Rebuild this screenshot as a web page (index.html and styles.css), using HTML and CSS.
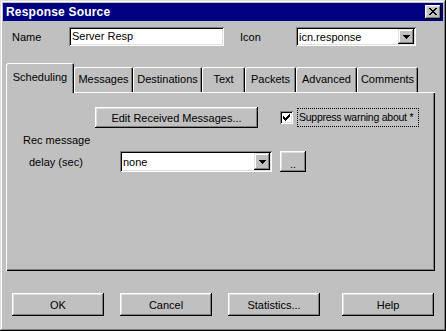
FILE: index.html
```html
<!DOCTYPE html>
<html lang="en">
<head>
    <meta charset="UTF-8">
    <meta name="viewport" content="width=device-width, initial-scale=1.0">
    <title>Response Source</title>
    <link rel="stylesheet" href="styles.css">
</head>
<body>
    <div class="window">
        <div class="titlebar">
            <span class="title">Response Source</span>
            <span class="close">
                <svg width="8" height="7" viewBox="0 0 8 7" shape-rendering="crispEdges">
                    <path d="M0 0h2v1h-2zM6 0h2v1h-2zM1 1h2v1h-2zM5 1h2v1h-2zM2 2h4v1h-4zM3 3h2v1h-2zM2 4h4v1h-4zM1 5h2v1h-2zM5 5h2v1h-2zM0 6h2v1h-2zM6 6h2v1h-2z" fill="#000"/>
                </svg>
            </span>
        </div>

        <div class="name-row">
            <span class="name-label">Name</span>
            <span class="field name-field">Server Resp</span>
            <span class="icon-label">Icon</span>
            <span class="field combo icon-combo">
                <span class="combo-text">icn.response</span>
                <span class="drop"><svg width="7" height="4" viewBox="0 0 7 4" shape-rendering="crispEdges"><path d="M0 0h7v1h-7zM1 1h5v1h-5zM2 2h3v1h-3zM3 3h1v1h-1z" fill="#000"/></svg></span>
            </span>
        </div>

        <div class="tabs">
            <div class="tab active" style="width: 68px">Scheduling</div>
            <div class="tab" style="width: 59px">Messages</div>
            <div class="tab" style="width: 69px">Destinations</div>
            <div class="tab" style="width: 43px">Text</div>
            <div class="tab" style="width: 51px">Packets</div>
            <div class="tab" style="width: 61px">Advanced</div>
            <div class="tab" style="width: 61px">Comments</div>
        </div>

        <div class="panel">
            <div class="panel-row">
                <button class="btn edit-btn">Edit Received Messages...</button>
                <span class="check">
                    <svg width="7" height="7" viewBox="0 0 7 7" shape-rendering="crispEdges"><path d="M6 0h1v3h-1zM5 1h1v3h-1zM4 2h1v3h-1zM0 2h1v3h-1zM1 3h1v3h-1zM2 4h1v3h-1zM3 3h1v3h-1z" fill="#000"/></svg>
                </span>
                <span class="check-label">Suppress warning about *</span>
            </div>
            <div class="rec-label">Rec message</div>
            <div class="delay-row">
                <span class="delay-label">delay (sec)</span>
                <span class="field combo delay-combo">
                    <span class="combo-text">none</span>
                    <span class="drop"><svg width="7" height="4" viewBox="0 0 7 4" shape-rendering="crispEdges"><path d="M0 0h7v1h-7zM1 1h5v1h-5zM2 2h3v1h-3zM3 3h1v1h-1z" fill="#000"/></svg></span>
                </span>
                <button class="btn dots">..</button>
            </div>
        </div>

        <div class="buttons">
            <button class="btn big">OK</button>
            <button class="btn big">Cancel</button>
            <button class="btn big">Statistics...</button>
            <button class="btn big help">Help</button>
        </div>
    </div>
</body>
</html>
```

FILE: styles.css
```css
body {
    margin: 0;
    background-color: #c0c0c0;
    font-family: "Liberation Sans", Arial, sans-serif;
    font-size: 11px;
    color: #000;
}

.window {
    width: 446px;
    height: 331px;
    box-sizing: border-box;
    padding: 3px;
    background-color: #c0c0c0;
    box-shadow: inset -1px -1px #000, inset 1px 1px #dfdfdf, inset -2px -2px #808080, inset 2px 2px #fff;
    display: flex;
    flex-direction: column;
}

.titlebar {
    height: 18px;
    flex-shrink: 0;
    background-color: #000080;
    color: #fff;
    display: flex;
    align-items: center;
    justify-content: space-between;
    padding: 0 2px 0 3px;
}

.title {
    font-weight: bold;
    font-size: 12px;
    letter-spacing: 0.2px;
}

.close {
    width: 16px;
    height: 14px;
    box-sizing: border-box;
    background-color: #c0c0c0;
    box-shadow: inset -1px -1px #000, inset 1px 1px #fff, inset -2px -2px #808080, inset 2px 2px #dfdfdf;
    display: flex;
    align-items: center;
    justify-content: center;
    padding-bottom: 1px;
}

.close svg {
    display: block;
}

/* sunken white field */
.field {
    box-sizing: border-box;
    background-color: #fff;
    box-shadow: inset 1px 1px #808080, inset -1px -1px #fff, inset 2px 2px #000, inset -2px -2px #dfdfdf;
}

.name-row {
    margin-top: 6px;
    height: 19px;
    display: flex;
    align-items: center;
    padding-left: 9px;
}

.name-label {
    width: 57px;
}

.name-field {
    width: 155px;
    height: 19px;
    line-height: 19px;
    padding-left: 3px;
}

.icon-label {
    margin-left: 16px;
    width: 56px;
}

.combo {
    display: flex;
    align-items: center;
    padding: 2px;
}

.combo-text {
    flex: 1;
    padding-left: 1px;
}

.drop {
    width: 16px;
    align-self: stretch;
    box-sizing: border-box;
    background-color: #c0c0c0;
    box-shadow: inset -1px -1px #000, inset 1px 1px #dfdfdf, inset -2px -2px #808080, inset 2px 2px #fff;
    display: flex;
    align-items: center;
    justify-content: center;
}

.drop svg {
    display: block;
}

.icon-combo {
    width: 120px;
    height: 19px;
}

.tabs {
    margin: 17px 0 0 3px;
    height: 29px;
    flex-shrink: 0;
    display: flex;
    align-items: flex-end;
    position: relative;
    z-index: 1;
}

.tab {
    height: 25px;
    box-sizing: border-box;
    padding-top: 6px;
    text-align: center;
    white-space: nowrap;
    background-color: #c0c0c0;
    border-radius: 2px 2px 0 0;
    box-shadow: inset 1px 1px #fff, inset -1px 0 #000, inset -2px 0 #808080;
}

.tab.active {
    height: 30px;
    margin-bottom: -1px;
    padding-top: 8px;
}

.panel {
    height: 179px;
    flex-shrink: 0;
    margin: 0 8px 0 3px;
    box-sizing: border-box;
    box-shadow: inset 1px 1px #fff, inset -1px -1px #000, inset -2px -2px #808080;
}

.btn {
    font-family: inherit;
    font-size: 11px;
    color: #000;
    border: none;
    padding: 0;
    background-color: #c0c0c0;
    box-shadow: inset -1px -1px #000, inset 1px 1px #fff, inset -2px -2px #808080, inset 2px 2px #dfdfdf;
}

.panel-row {
    margin-top: 15px;
    height: 21px;
    display: flex;
    align-items: center;
    padding-left: 89px;
}

.edit-btn {
    width: 163px;
    height: 21px;
}

.check {
    margin-left: 22px;
    width: 13px;
    height: 13px;
    box-sizing: border-box;
    background-color: #fff;
    box-shadow: inset 1px 1px #808080, inset -1px -1px #fff, inset 2px 2px #000, inset -2px -2px #dfdfdf;
    display: flex;
    align-items: center;
    justify-content: center;
}

.check svg {
    display: block;
}

.check-label {
    margin-left: 4px;
    width: 122px;
    height: 19px;
    box-sizing: border-box;
    border: 1px dotted #000;
    line-height: 17px;
    padding-left: 1px;
    font-size: 10.5px;
    letter-spacing: -0.25px;
    white-space: nowrap;
}

.rec-label {
    margin-top: 6px;
    padding-left: 17px;
    line-height: 13px;
}

.delay-row {
    margin-top: 4px;
    height: 21px;
    display: flex;
    align-items: center;
    padding-left: 23px;
}

.delay-label {
    width: 91px;
}

.delay-combo {
    width: 152px;
    height: 21px;
}

.dots {
    margin-left: 8px;
    width: 26px;
    height: 21px;
    padding-top: 4px;
}

.buttons {
    margin-top: 22px;
    display: flex;
    padding-left: 9px;
}

.big {
    width: 92px;
    height: 23px;
    margin-right: 16px;
}

.big.help {
    margin-left: 6px;
    margin-right: 0;
}
```
